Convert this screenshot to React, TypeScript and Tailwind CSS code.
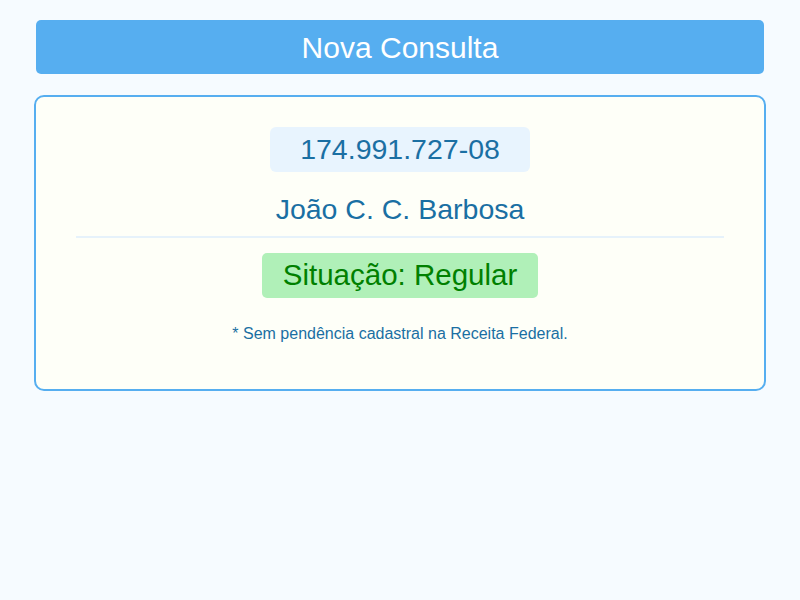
export default function App() {
  return (
    <div className="min-h-[600px] w-full bg-[#f6fbff] font-['Liberation_Sans',Arial,sans-serif]">
      <div className="mx-auto flex w-[732px] flex-col pt-5">
        <button className="mx-[2px] h-[54px] rounded-[5px] bg-[#56aef0] text-[30px] text-white">
          Nova Consulta
        </button>
        <div className="mt-[21px] flex flex-col items-center rounded-[10px] border-2 border-[#56aef0] bg-[#fefff8] px-10 pb-[45px] pt-[30px] text-[#1a6fa3]">
          <div className="flex h-[45px] w-[260px] items-center justify-center rounded-[6px] bg-[#e8f4fe] text-[28.5px]">
            174.991.727-08
          </div>
          <div className="mt-[20px] text-[28.5px] leading-[34px]">João C. C. Barbosa</div>
          <div className="mt-[10px] h-[2px] w-full bg-[#e6f2fb]" />
          <div className="mt-[15px] flex h-[45px] w-[276px] items-center justify-center rounded-[5px] bg-[#b0f0b8] text-[29.5px] text-[#008000]">
            Situação: Regular
          </div>
          <p className="mt-[26px] text-[16px] leading-[20px]">* Sem pendência cadastral na Receita Federal.</p>
        </div>
      </div>
    </div>
  );
}
